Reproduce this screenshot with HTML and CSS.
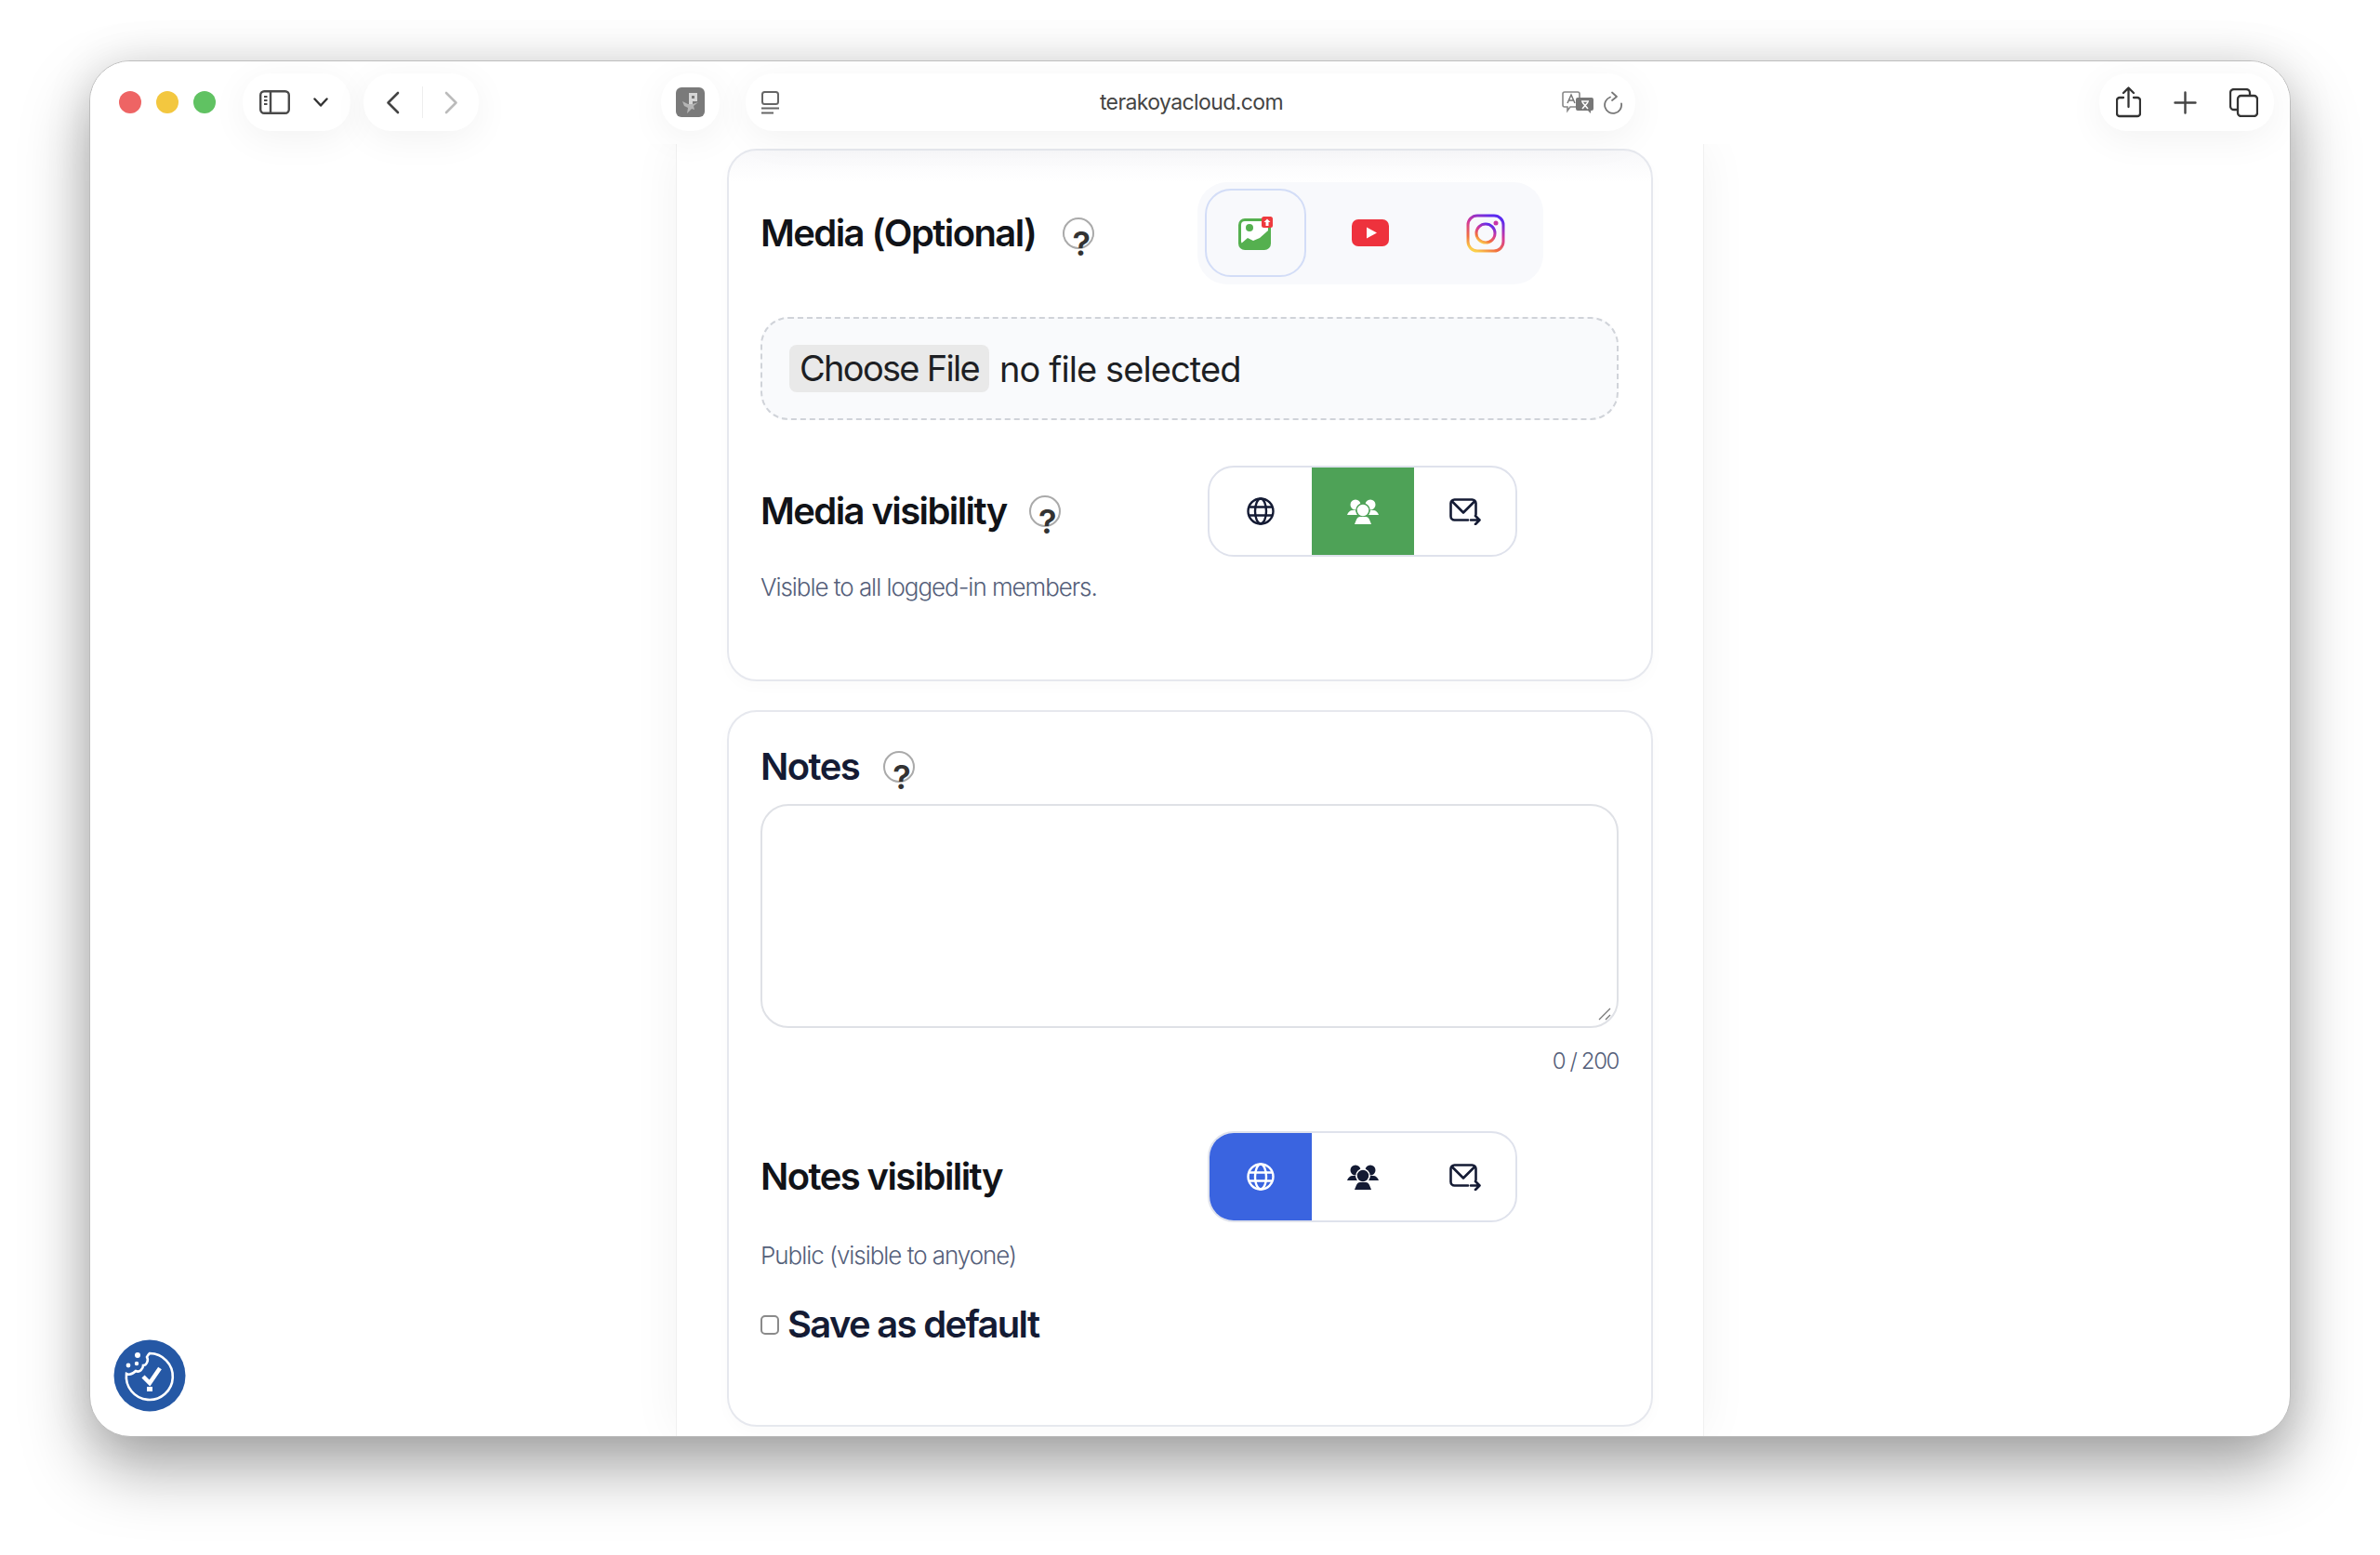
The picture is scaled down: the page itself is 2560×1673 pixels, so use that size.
FILE: index.html
```html
<!DOCTYPE html>
<html lang="en">
<head>
    <meta charset="UTF-8">
    <title>terakoyacloud.com</title>
    <link rel="stylesheet" href="styles.css">
</head>
<body>
    <div class="window">
        <div class="toolbar">
            <div class="lights">
                <span class="light red"></span>
                <span class="light yellow"></span>
                <span class="light green"></span>
            </div>

            <div class="pill sidebar-pill">
                <svg width="33" height="26" viewBox="0 0 33 26" fill="none" stroke="#4a4a4a" stroke-width="2.4"><rect x="1.2" y="1.2" width="30.6" height="23.6" rx="4"/><path d="M12 1.5v23"/><path d="M5 7h3.5M5 11h3.5M5 15h3.5" stroke-width="1.8"/></svg>
                <svg width="16" height="10" viewBox="0 0 16 10" fill="none" stroke="#333" stroke-width="2.4" stroke-linecap="round" stroke-linejoin="round"><path d="M1.5 1.5L8 8.5l6.5-7"/></svg>
            </div>

            <div class="pill nav-pill">
                <svg width="15" height="25" viewBox="0 0 15 25" fill="none" stroke="#444" stroke-width="2.6" stroke-linecap="round" stroke-linejoin="round"><path d="M13 2L2.5 12.500 13 23"/></svg>
                <span class="nav-divider"></span>
                <svg width="15" height="25" viewBox="0 0 15 25" fill="none" stroke="#bbb" stroke-width="2.6" stroke-linecap="round" stroke-linejoin="round"><path d="M2 2l10.500 10.500L2 23"/></svg>
            </div>

            <div class="pill ext-pill">
                <svg width="31" height="32" viewBox="0 0 31 32"><rect width="31" height="32" rx="6" fill="#7a7a7a"/><path d="M14 6h9v9h-5v3h-4z" fill="#d6d6d6"/><path d="M17 9h3v3h-3z" fill="#7a7a7a"/><path d="M7 15l6 3h5l6-2-5 4 1 4-3-1-5 5 1-6-4-2z" fill="#b5b5b5"/></svg>
            </div>

            <div class="pill url-pill">
                <svg class="reader-icon" width="21" height="25" viewBox="0 0 21 25" fill="none" stroke="#666" stroke-width="2"><rect x="2" y="1" width="17" height="13" rx="2.500"/><path d="M1 18.500h19M1 23.500h13"/></svg>
                <span class="url-text">terakoyacloud.com</span>
                <svg width="35" height="24" viewBox="0 0 35 24"><path d="M3 1h14a2 2 0 0 1 2 2v12a2 2 0 0 1-2 2H9l-3 4v-4H3a2 2 0 0 1-2-2V3a2 2 0 0 1 2-2z" fill="#fff" stroke="#888" stroke-width="1.600"/><path d="M6 13l4-9 4 9M7.500 10h5" fill="none" stroke="#777" stroke-width="1.500"/><path d="M17 7h15a2 2 0 0 1 2 2v10a2 2 0 0 1-2 2h-1v3l-3-3H17a2 2 0 0 1-2-2V9a2 2 0 0 1 2-2z" fill="#777"/><path d="M21 11h8M22 19l6-7M22 12l6 7" fill="none" stroke="#fff" stroke-width="1.500"/></svg>
                <svg class="reload-icon" width="21" height="25" viewBox="0 0 21 25" fill="none" stroke="#777" stroke-width="1.800" stroke-linecap="round" stroke-linejoin="round"><path d="M7 6.500a9 9 0 1 0 12 7"/><path d="M9 1.500l5 4.500-5 4"/></svg>
            </div>

            <div class="pill actions-pill">
                <svg width="27" height="34" viewBox="0 0 27 34" fill="none" stroke="#333" stroke-width="2.300" stroke-linecap="round" stroke-linejoin="round"><path d="M8 12H4a3 3 0 0 0-3 3v14a3 3 0 0 0 3 3h19a3 3 0 0 0 3-3V15a3 3 0 0 0-3-3h-4"/><path d="M13.500 22V2M8 7l5.500-5.500L19 7"/></svg>
                <svg width="25" height="25" viewBox="0 0 25 25" fill="none" stroke="#444" stroke-width="2.400" stroke-linecap="round"><path d="M12.500 1.500v22M1.500 12.500h22"/></svg>
                <svg width="31" height="31" viewBox="0 0 31 31" fill="none" stroke="#333" stroke-width="2.300"><rect x="9" y="8" width="21" height="22" rx="3.500"/><path d="M9 23H5a4 4 0 0 1-4-4V5a4 4 0 0 1 4-4h13a4 4 0 0 1 4 4v3"/></svg>
            </div>
        </div>

        <div class="page">
            <div class="column">
                <section class="card media-card">
                    <div class="field-row">
                        <div class="field-head media-head">
                            <h2>Media (Optional)</h2>
                            <span class="help"><b>?</b></span>
                        </div>
                        <div class="media-tabs">
                            <div class="media-tab active">
                                <svg width="40" height="40" viewBox="0 0 40 40"><rect x="2" y="4" width="35" height="34" rx="7" fill="#55b04f"/><rect x="5" y="7" width="29" height="25" rx="4" fill="#fff"/><circle cx="14" cy="14" r="4" fill="#55b04f"/><path d="M5 31l7-6 6 3 7-3 9-8v15a3 3 0 0 1-3 3H8a3 3 0 0 1-3-3z" fill="#55b04f"/><rect x="27" y="2" width="12" height="12" rx="2.500" fill="#ee3a3e"/><path d="M33 4.500l3.500 3.500h-2v4h-3V8h-2z" fill="#fff"/></svg>
                            </div>
                            <div class="media-tab">
                                <svg width="40" height="29" viewBox="0 0 40 29"><rect width="40" height="29" rx="7" fill="#ee323d"/><path d="M16 8.500l11 6-11 6z" fill="#fff"/></svg>
                            </div>
                            <div class="media-tab">
                                <svg width="42" height="42" viewBox="0 0 42 42" fill="none"><defs><linearGradient id="ig" x1="0.200" y1="1" x2="0.700" y2="0"><stop offset="0" stop-color="#fbd14b"/><stop offset="0.250" stop-color="#f2703f"/><stop offset="0.600" stop-color="#d3399a"/><stop offset="1" stop-color="#5b2bf0"/></linearGradient></defs><rect x="2" y="2" width="38" height="38" rx="10" stroke="url(#ig)" stroke-width="3"/><circle cx="21" cy="21" r="10" stroke="url(#ig)" stroke-width="3"/><circle cx="32" cy="10" r="2.500" fill="#c935a8"/></svg>
                            </div>
                        </div>
                    </div>

                    <div class="file-box">
                        <span class="file-btn">Choose File</span>
                        <span class="file-name">no file selected</span>
                    </div>

                    <div class="field-row visibility-row">
                        <div class="field-head vis-head">
                            <h2>Media visibility</h2>
                            <span class="help"><b>?</b></span>
                        </div>
                        <div class="seg">
                            <div class="seg-btn">
                                <svg width="30" height="30" viewBox="0 0 30 30" fill="none" stroke="currentColor" stroke-width="2.400"><circle cx="15" cy="15" r="13.500"/><ellipse cx="15" cy="15" rx="6" ry="13.500"/><path d="M2 10.500h26M2 19.500h26"/></svg>
                            </div>
                            <div class="seg-btn on-green">
                                <svg width="34" height="27" viewBox="0 0 34 27" fill="currentColor"><circle cx="9" cy="6" r="5.500"/><circle cx="25" cy="6" r="5.500"/><path d="M0 17c1-3 3-5 6-5h3l2 5z M34 17c-1-3-3-5-6-5h-3l-2 5z"/><circle cx="17" cy="12" r="7" stroke="#4ea257" stroke-width="1.500"/><path d="M8 27l2-5c1-2 2-3 4-3h6c2 0 3 1 4 3l2 5z"/></svg>
                            </div>
                            <div class="seg-btn">
                                <svg width="34" height="29" viewBox="0 0 34 29" fill="none" stroke="currentColor" stroke-width="2.600" stroke-linecap="round" stroke-linejoin="round"><path d="M20 23.500H5.500a4 4 0 0 1-4-4v-14a4 4 0 0 1 4-4h19a4 4 0 0 1 4 4v12"/><path d="M3 3.500L15 15.500 27 3.500"/><path d="M23 23.500h9.500M28 19l4.500 4.500-4.500 4.500"/></svg>
                            </div>
                        </div>
                    </div>
                    <p class="hint">Visible to all logged-in members.</p>
                </section>

                <section class="card notes-card">
                    <div class="field-head notes-head">
                        <h2>Notes</h2>
                        <span class="help"><b>?</b></span>
                    </div>
                    <div class="notes-input">
                        <svg width="14" height="14" viewBox="0 0 14 14" stroke="#777" stroke-width="1.300"><path d="M1 13L13 1M8 13l5-5"/></svg>
                    </div>
                    <p class="counter">0 / 200</p>

                    <div class="field-row visibility-row notes-vis">
                        <div class="field-head vis-head">
                            <h2>Notes visibility</h2>
                        </div>
                        <div class="seg">
                            <div class="seg-btn on-blue">
                                <svg width="30" height="30" viewBox="0 0 30 30" fill="none" stroke="currentColor" stroke-width="2.400"><circle cx="15" cy="15" r="13.500"/><ellipse cx="15" cy="15" rx="6" ry="13.500"/><path d="M2 10.500h26M2 19.500h26"/></svg>
                            </div>
                            <div class="seg-btn">
                                <svg width="34" height="27" viewBox="0 0 34 27" fill="currentColor"><circle cx="9" cy="6" r="5.500"/><circle cx="25" cy="6" r="5.500"/><path d="M0 17c1-3 3-5 6-5h3l2 5z M34 17c-1-3-3-5-6-5h-3l-2 5z"/><circle cx="17" cy="12" r="7" stroke="#fff" stroke-width="1.500"/><path d="M8 27l2-5c1-2 2-3 4-3h6c2 0 3 1 4 3l2 5z"/></svg>
                            </div>
                            <div class="seg-btn">
                                <svg width="34" height="29" viewBox="0 0 34 29" fill="none" stroke="currentColor" stroke-width="2.600" stroke-linecap="round" stroke-linejoin="round"><path d="M20 23.500H5.500a4 4 0 0 1-4-4v-14a4 4 0 0 1 4-4h19a4 4 0 0 1 4 4v12"/><path d="M3 3.500L15 15.500 27 3.500"/><path d="M23 23.500h9.500M28 19l4.500 4.500-4.500 4.500"/></svg>
                            </div>
                        </div>
                    </div>
                    <p class="hint notes-hint">Public (visible to anyone)</p>

                    <label class="save-default">
                        <span class="check"></span>
                        <span>Save as default</span>
                    </label>
                </section>
            </div>

            <div class="cookie-btn">
                <svg width="78" height="78" viewBox="0 0 78 78"><circle cx="39" cy="39" r="38.500" fill="#2558a5"/><path d="M39 15A25 25 0 1 1 14 37C18 39 22 36 24 34C28 36 32 32 32 28C36 28 38 22 36 19C37 17 38 16 39 15z" fill="none" stroke="#fff" stroke-width="2.600"/><circle cx="26" cy="17" r="3" fill="#fff"/><circle cx="16" cy="28" r="2.400" fill="#fff"/><circle cx="25" cy="26" r="2.200" fill="#fff"/><path d="M32 40l7 7 11-16" fill="none" stroke="#fff" stroke-width="4.500"/><rect x="36" y="51" width="6" height="5" fill="#fff"/></svg>
            </div>
        </div>
    </div>
</body>
</html>
```

FILE: styles.css
```css
*{
    margin: 0;
    padding: 0;
    box-sizing: border-box;
}

html, body{
    height: 100%;
    background-color: #ffffff;
    overflow: hidden;
}

body{
    font-family: 'Inter', 'Liberation Sans', sans-serif;
    padding: 65px 96px 127px;
}

.window{
    height: 1481px;
    background-color: #ffffff;
    border: 1px solid #bdbdbd;
    border-radius: 44px;
    box-shadow: 0 34px 70px rgba(0, 0, 0, 0.34), 0 0 50px rgba(0, 0, 0, 0.1);
    overflow: hidden;
    display: flex;
    flex-direction: column;
}

/* toolbar */
.toolbar{
    flex: 0 0 89px;
    display: flex;
    align-items: flex-start;
    padding: 13px 17px 0 31px;
    background-color: #ffffff;
    position: relative;
    z-index: 2;
}

.lights{
    display: flex;
    gap: 16px;
    margin-top: 19px;
}

.light{
    width: 24px;
    height: 24px;
    border-radius: 50%;
}

.red{ background-color: #ee6464; }
.yellow{ background-color: #f3c73f; }
.green{ background-color: #60c262; }

.pill{
    height: 62px;
    background-color: #ffffff;
    border-radius: 30px;
    box-shadow: 0 8px 40px rgba(0, 0, 0, 0.055);
    display: flex;
    align-items: center;
}

.sidebar-pill{
    width: 116px;
    margin-left: 29px;
    padding-left: 18px;
    gap: 25px;
}

.nav-pill{
    width: 124px;
    margin-left: 14px;
    padding-left: 24px;
}

.nav-divider{
    width: 1px;
    height: 34px;
    background-color: #eeeeee;
    margin: 0 23px 0 24px;
}

.ext-pill{
    width: 63px;
    margin-left: 196px;
    justify-content: center;
}

.url-pill{
    width: 957px;
    margin-left: 28px;
    padding: 0 13px 0 16px;
}

.url-text{
    flex: 1;
    text-align: center;
    font-size: 23px;
    letter-spacing: -0.6px;
    color: #444444;
    padding-left: 44px;
}

.reload-icon{
    margin-left: 10px;
}

.actions-pill{
    width: 188px;
    margin-left: auto;
    padding-left: 18px;
    gap: 35px;
}

/* page behind the toolbar */
.page{
    flex: 1;
    display: flex;
    justify-content: center;
    position: relative;
    min-height: 0;
}

.column{
    width: 1106px;
    height: 100%;
    padding: 5px 54px 0;
    border-left: 1px solid #f0f0f0;
    border-right: 1px solid #f0f0f0;
    box-shadow: 0 0 50px rgba(0, 0, 0, 0.05);
    display: flex;
    flex-direction: column;
    gap: 31px;
}

.card{
    width: 996px;
    border: 2px solid #e6e8ee;
    border-radius: 32px;
    background-color: #ffffff;
    padding: 35px 35px 0 34px;
    box-shadow: 0 6px 16px rgba(0, 0, 0, 0.02);
    flex-shrink: 0;
}

.media-card{
    height: 573px;
    padding-top: 34px;
    background-image: linear-gradient(#f8f8fa, #ffffff 34px);
}

.notes-card{
    height: 771px;
}

.field-row{
    display: flex;
    align-items: center;
}

.field-head{
    display: flex;
    align-items: center;
}

.field-head h2{
    font-size: 40px;
    font-weight: 600;
    line-height: 48px;
    letter-spacing: -1.6px;
    color: #111318;
}

.media-head{
    width: 470px;
}

.vis-head{
    width: 481px;
}

.help{
    width: 34px;
    height: 34px;
    margin-left: 26px;
    border: 2px solid #aaaaaa;
    border-radius: 50%;
    display: flex;
    justify-content: center;
    font-size: 36px;
    line-height: 32px;
    color: #333333;
}

.media-head .help{
    margin-left: 29px;
}

.vis-head .help{
    margin-left: 24px;
}

.help b{
    font-weight: 600;
    transform: translate(3px, 10px);
}

/* media source tabs */
.media-tabs{
    width: 372px;
    height: 110px;
    padding: 7px 8px;
    background-color: #f8f9fc;
    border-radius: 32px;
    display: flex;
    gap: 15px;
}

.media-tab{
    width: 109px;
    height: 95px;
    display: flex;
    align-items: center;
    justify-content: center;
    border: 2px solid transparent;
    border-radius: 28px;
}

.media-tab.active{
    border-color: #d3ddf7;
}

.file-box{
    height: 111px;
    margin-top: 35px;
    padding: 0 29px;
    background-color: #f9fafc;
    border: 2px dashed #d0d3d9;
    border-radius: 30px;
    display: flex;
    align-items: center;
    gap: 11px;
    font-size: 38px;
    letter-spacing: -0.9px;
    color: #1d1f24;
}

.file-btn{
    width: 215px;
    height: 51px;
    line-height: 51px;
    text-align: center;
    letter-spacing: -1.7px;
    background-color: #e9e9e9;
    border-radius: 8px;
}

/* visibility switch */
.visibility-row{
    margin-top: 49px;
}

.seg{
    width: 333px;
    height: 98px;
    border: 2px solid #dfe2ec;
    border-radius: 28px;
    overflow: hidden;
    display: flex;
    background-color: #ffffff;
}

.seg-btn{
    flex: 0 0 110px;
    display: flex;
    align-items: center;
    justify-content: center;
    color: #141b34;
}

.on-green{
    background-color: #4ea257;
    color: #ffffff;
}

.on-blue{
    background-color: #3a64e0;
    color: #ffffff;
}

.hint{
    margin-top: 18px;
    font-size: 26px;
    font-weight: 300;
    line-height: 30px;
    letter-spacing: -1.05px;
    color: #55607a;
}

.notes-hint{
    margin-top: 21px;
}

/* notes */
.notes-head h2{
    color: #141b34;
}

.notes-input{
    height: 241px;
    margin-top: 16px;
    border: 2px solid #dfe1e6;
    border-radius: 30px;
    display: flex;
    justify-content: flex-end;
    align-items: flex-end;
    padding: 0 6px 6px 0;
}

.counter{
    margin-top: 21px;
    text-align: right;
    font-size: 24px;
    font-weight: 300;
    line-height: 30px;
    letter-spacing: -1.4px;
    color: #55607a;
}

.notes-vis{
    margin-top: 60px;
}

.save-default{
    display: flex;
    align-items: center;
    gap: 9px;
    margin-top: 35px;
    font-size: 40px;
    font-weight: 600;
    line-height: 48px;
    letter-spacing: -1.7px;
    color: #141b34;
}

.check{
    width: 20px;
    height: 21px;
    border: 2px solid #8a8a8a;
    border-radius: 5px;
    background-color: #ffffff;
}

/* floating cookie button */
.cookie-btn{
    position: absolute;
    left: 25px;
    bottom: 26px;
    width: 78px;
    height: 78px;
}
```
